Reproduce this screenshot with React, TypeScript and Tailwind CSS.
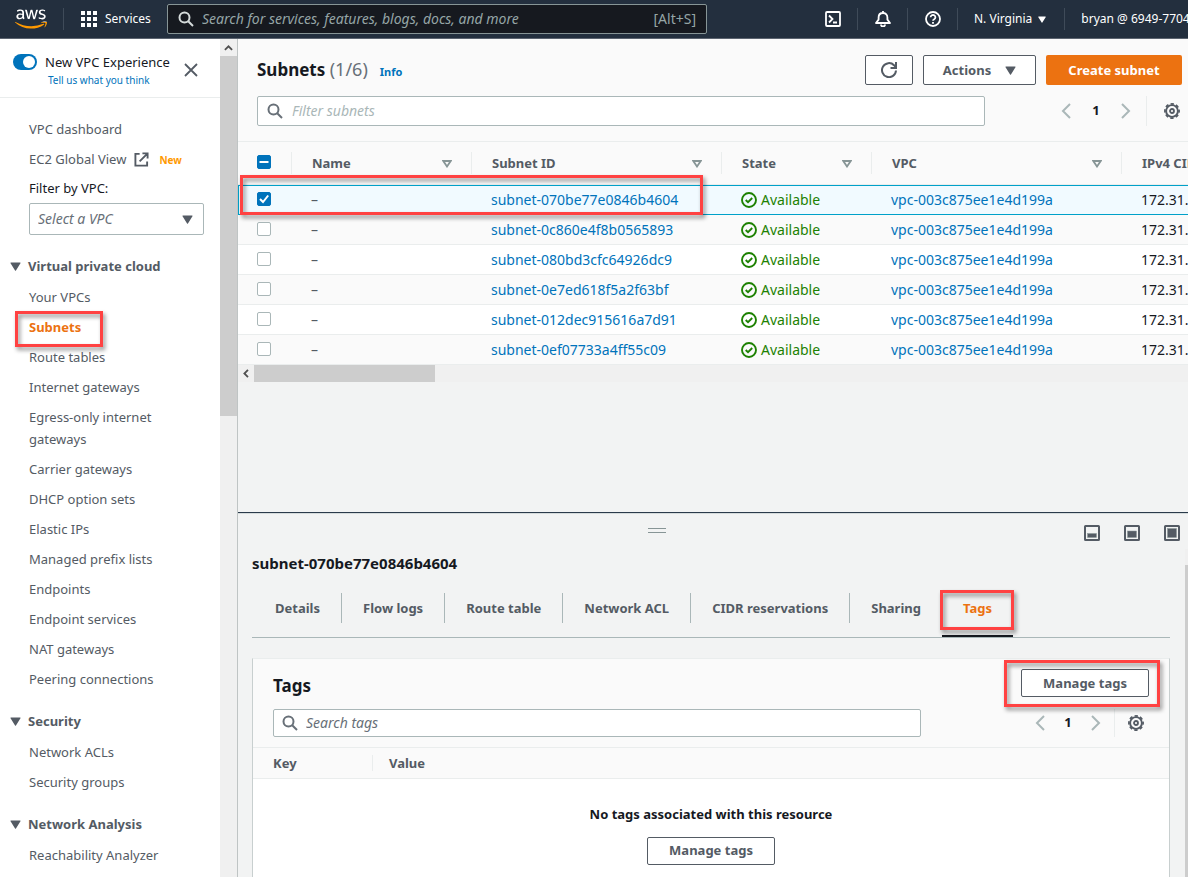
import React, { useState } from "react";
import { FaAws } from "react-icons/fa";

const vpcLinks = [
  "Your VPCs",
  "Subnets",
  "Route tables",
  "Internet gateways",
  "Egress-only internet gateways",
  "Carrier gateways",
  "DHCP option sets",
  "Elastic IPs",
  "Managed prefix lists",
  "Endpoints",
  "Endpoint services",
  "NAT gateways",
  "Peering connections",
];

const subnetIds = [
  "subnet-070be77e0846b4604",
  "subnet-0c860e4f8b0565893",
  "subnet-080bd3cfc64926dc9",
  "subnet-0e7ed618f5a2f63bf",
  "subnet-012dec915616a7d91",
  "subnet-0ef07733a4ff55c09",
];

const tabs = ["Details", "Flow logs", "Route table", "Network ACL", "CIDR reservations", "Sharing", "Tags"];

function Caret({ className = "", size = "h-[9px] w-[11px]" }: { className?: string; size?: string }) {
  return (
    <svg viewBox="0 0 12 10" className={`shrink-0 ${size} ${className}`} fill="currentColor" aria-hidden="true">
      <path d="M1 0.5h10a.6.6 0 0 1 .5 1L6.5 9.4a.6.6 0 0 1-1 0L.5 1.5a.6.6 0 0 1 .5-1z" />
    </svg>
  );
}

function SearchIcon({ className = "" }: { className?: string }) {
  return (
    <svg viewBox="0 0 16 16" className={`size-4 shrink-0 ${className}`} fill="none" stroke="currentColor" strokeWidth="2" aria-hidden="true">
      <circle cx="6.5" cy="6.5" r="5" />
      <path d="M10.2 10.2l4.8 4.8" />
    </svg>
  );
}

function GearIcon() {
  return (
    <svg viewBox="0 0 16 16" className="size-4" fill="none" stroke="currentColor" aria-hidden="true">
      <circle cx="8" cy="8" r="5.9" strokeWidth="1.9" />
      <circle cx="8" cy="8" r="7.1" strokeWidth="1.7" strokeDasharray="3.3 2.276" strokeDashoffset="1.65" />
      <circle cx="8" cy="8" r="2" strokeWidth="1.8" />
    </svg>
  );
}

function Chevron({ flip = false }: { flip?: boolean }) {
  return (
    <svg viewBox="0 0 10 16" className="h-4 w-[10px]" fill="none" stroke="currentColor" strokeWidth="2" aria-hidden="true">
      <path d={flip ? "M1 1l7 7-7 7" : "M9 1L2 8l7 7"} />
    </svg>
  );
}

function Divider({ className = "" }: { className?: string }) {
  return <span className={`w-px shrink-0 ${className}`} />;
}

function Pager({ roomy = false }: { roomy?: boolean }) {
  return (
    <div className="flex shrink-0 items-center text-[13px] font-bold">
      <button type="button" aria-label="Previous page" className="grid w-5 place-items-center text-[#aab7b8]">
        <Chevron />
      </button>
      <span className={`text-center text-[#16191f] ${roomy ? "w-10" : "w-9"}`}>1</span>
      <button type="button" aria-label="Next page" className="grid w-5 place-items-center text-[#aab7b8]">
        <Chevron flip />
      </button>
      <Divider className={`bg-[#eaeded] ${roomy ? "ml-[10px] h-[30px]" : "ml-2 h-7"}`} />
      <button type="button" aria-label="Preferences" className={`text-[#545b64] ${roomy ? "ml-[17px]" : "ml-[13px]"}`}>
        <GearIcon />
      </button>
    </div>
  );
}

function Checkbox({ label, checked, mixed = false, onChange }: { label: string; checked: boolean; mixed?: boolean; onChange: () => void }) {
  const on = checked || mixed;
  return (
    <span className="grid size-[14px] place-items-center">
      <input
        type="checkbox"
        aria-label={label}
        checked={checked}
        onChange={onChange}
        className={`col-start-1 row-start-1 size-[14px] appearance-none rounded-xs border ${on ? "border-[#0073bb] bg-[#0073bb]" : "border-[#aab7b8] bg-white"}`}
      />
      {on && (
        <svg viewBox="0 0 14 14" className="pointer-events-none col-start-1 row-start-1 size-[14px]" fill="none" stroke="white" strokeWidth="2" aria-hidden="true">
          <path d={mixed ? "M2.5 7h9" : "M3 7l3 3 5.2-6.5"} />
        </svg>
      )}
    </span>
  );
}

function Highlight({ className }: { className: string }) {
  return (
    <span
      aria-hidden="true"
      className={`pointer-events-none absolute z-10 border-[3px] border-[#ff4242] drop-shadow-[2px_3px_2px_rgba(0,0,0,0.45)] ${className}`}
    />
  );
}

function TopBar() {
  return (
    <header className="flex h-[39px] shrink-0 items-center overflow-hidden border-b border-[#5c6470] bg-[#232f3e] text-[12px] whitespace-nowrap text-white">
      <a href="#home" aria-label="AWS home" className="ml-[15px] shrink-0">
        <svg width="0" height="0" className="absolute" aria-hidden="true">
          <linearGradient id="logo-fill" gradientUnits="userSpaceOnUse" x1="0" y1="0" x2="0" y2="512">
            <stop offset="0.62" stopColor="#fff" />
            <stop offset="0.62" stopColor="#f90" />
          </linearGradient>
        </svg>
        <FaAws className="h-[26px] w-[32px] [&_path]:fill-[url(#logo-fill)]" />
      </a>
      <Divider className="ml-4 h-[22px] bg-[#3f4b59]" />
      <button type="button" className="ml-[17px] flex shrink-0 items-center gap-2">
        <svg viewBox="0 0 16 16" className="size-4" fill="white" aria-hidden="true">
          {[0, 6, 12].map((y) => [0, 6, 12].map((x) => <rect key={`${x}-${y}`} x={x} y={y} width="4" height="4" />))}
        </svg>
        <span className="w-[46px] text-left">Services</span>
      </button>
      <label className="ml-4 flex h-[30px] w-[540px] shrink-0 items-center rounded-xs border border-[#879596] bg-[#16191f] px-[10px]">
        <SearchIcon className="mr-2 text-[#d5dbdb]" />
        <input
          type="search"
          aria-label="Search"
          placeholder="Search for services, features, blogs, docs, and more"
          className="min-w-0 flex-1 bg-transparent pb-[2px] text-[14px] outline-none placeholder:text-[#95a5a6] placeholder:italic"
        />
        <span className="pb-[2px] text-[14px] text-[#95a5a6]">[Alt+S]</span>
      </label>
      <div className="flex flex-1 items-center pl-[118px]">
        <button type="button" aria-label="CloudShell" className="shrink-0">
          <svg viewBox="0 0 16 16" className="size-4" fill="none" stroke="white" strokeWidth="1.8" aria-hidden="true">
            <rect x="1" y="1" width="14" height="14" rx="1" />
            <path d="M4 4.5L7.5 8 4 11.5M8 11.5h4" />
          </svg>
        </button>
        <Divider className="ml-4 h-[22px] bg-[#3f4b59]" />
        <button type="button" aria-label="Notifications" className="ml-[17px] shrink-0">
          <svg viewBox="0 0 16 16" className="size-4" fill="none" stroke="white" strokeWidth="1.8" strokeLinejoin="round" aria-hidden="true">
            <path d="M8 0v2M1 12h14l-2.600-3.400V6.400C12.400 3.600 10.400 2 8 2S3.600 3.600 3.600 6.400V8.600z" />
            <path d="M6 13.500a2 2 0 0 0 4 0" />
          </svg>
        </button>
        <Divider className="ml-4 h-[22px] bg-[#3f4b59]" />
        <button type="button" aria-label="Help" className="ml-[17px] shrink-0">
          <svg viewBox="0 0 16 16" className="size-4" fill="none" stroke="white" strokeWidth="1.8" aria-hidden="true">
            <circle cx="8" cy="8" r="7" />
            <path d="M5.600 6.300a2.400 2.300 0 1 1 3.600 2c-.9.5-1.200.8-1.200 1.500M8 11v1.700" />
          </svg>
        </button>
        <Divider className="ml-4 h-[22px] bg-[#3f4b59]" />
        <button type="button" className="ml-4 flex shrink-0 items-center gap-[6px]">
          N. Virginia
          <Caret size="h-[7px] w-[8px]" />
        </button>
        <Divider className="ml-[18px] h-[22px] bg-[#3f4b59]" />
        <button type="button" className="ml-4 shrink-0">bryan @ 6949-7704</button>
      </div>
    </header>
  );
}

function NavSection({ title, links, active }: { title: string; links: string[]; active?: string }) {
  return (
    <section className="mt-5">
      <h2>
        <button type="button" className="flex items-center gap-[7px] pl-[10px] font-bold">
          <Caret />
          {title}
        </button>
      </h2>
      <ul className="mt-[9px] flex flex-col gap-2 pr-12 pl-[29px]">
        {links.map((link) => (
          <li key={link} className="relative">
            {link === active && <Highlight className="top-[-5px] left-[-14px] h-[36px] w-[88px]" />}
            <a href="#nav" className={link === active ? "font-bold text-[#ec7211]" : ""}>
              {link}
            </a>
          </li>
        ))}
      </ul>
    </section>
  );
}

function Sidebar() {
  return (
    <aside className="flex w-[238px] shrink-0 border-r border-[#bfc4c4] bg-white text-[13px] leading-[22px] text-[#545b64]">
      <div className="min-w-0 flex-1 overflow-hidden">
        <div className="flex h-[59px] items-start border-b border-[#eaeded] pt-[13px] pl-[13px]">
          <label className="flex items-center pt-[2px]">
            <input type="checkbox" role="switch" aria-label="New VPC Experience" defaultChecked className="peer sr-only" />
            <span className="flex h-4 w-6 items-center justify-end rounded-full bg-[#0073bb] pr-[2px]">
              <span className="size-3 rounded-full bg-white" />
            </span>
          </label>
          <div className="ml-2 w-[130px] whitespace-nowrap">
            <p className="leading-5 text-[#16191f]">New VPC Experience</p>
            <a href="#feedback" className="ml-[3px] block text-[10px] leading-4 text-[#0073bb]">Tell us what you think</a>
          </div>
          <button type="button" aria-label="Close navigation" className="mt-[11px] ml-[9px]">
            <svg viewBox="0 0 14 14" className="size-[14px]" stroke="#545b64" strokeWidth="1.8" aria-hidden="true">
              <path d="M1 1l12 12M13 1L1 13" />
            </svg>
          </button>
        </div>
        <nav className="pt-5">
          <ul className="flex flex-col gap-2 pl-[29px]">
            <li><a href="#dashboard">VPC dashboard</a></li>
            <li>
              <a href="#global" className="flex items-center">
                EC2 Global View
                <svg viewBox="0 0 16 16" className="ml-2 size-[15px]" fill="none" stroke="currentColor" strokeWidth="2" aria-hidden="true">
                  <path d="M6 2H1.500v12.500H14V10M9 1.500h5.500V7M14 2L6 10" />
                </svg>
                <span className="ml-[10px] pt-[2px] text-[10px] leading-5 font-bold text-[#f90]">New</span>
              </a>
            </li>
          </ul>
          <div className="mt-2 flex flex-col pr-4 pl-[29px]">
            <label htmlFor="vpc-filter" className="leading-5 text-[#16191f]">Filter by VPC:</label>
            <div className="mt-[5px] grid items-center">
              <select id="vpc-filter" className="col-start-1 row-start-1 h-8 appearance-none rounded-xs border border-[#aab7b8] bg-white px-2 text-[14px] text-[#687078] italic">
                <option>Select a VPC</option>
              </select>
              <Caret className="pointer-events-none col-start-1 row-start-1 mr-[11px] justify-self-end" />
            </div>
          </div>
          <NavSection title="Virtual private cloud" links={vpcLinks} active="Subnets" />
          <NavSection title="Security" links={["Network ACLs", "Security groups"]} />
          <NavSection title="Network Analysis" links={["Reachability Analyzer"]} />
        </nav>
      </div>
      <div className="flex w-[17px] shrink-0 flex-col bg-[#f0f0f0]" aria-hidden="true">
        <span className="grid h-[17px] place-items-center">
          <svg viewBox="0 0 10 6" className="h-[6px] w-[9px]" fill="none" stroke="#505050" strokeWidth="2"><path d="M1 5.200l4-4 4 4" /></svg>
        </span>
        <span className="h-[360px] bg-[#cdcdcd]" />
      </div>
    </aside>
  );
}

function HeaderCell({ children, sortable = true }: { children: React.ReactNode; sortable?: boolean }) {
  return (
    <th scope="col" className="h-[43px] border-b border-[#eaeded] p-0 text-left text-[13px] font-bold">
      <div className="flex h-[22px] items-center justify-between border-l border-[#eaeded] pt-px pr-[19px] pl-5 whitespace-nowrap">
        {children}
        {sortable && (
          <svg viewBox="0 0 10 8" className="h-2 w-[10px]" fill="none" stroke="#879596" strokeWidth="1.8" aria-hidden="true">
            <path d="M1.300 1h7.400L5 6.500z" />
          </svg>
        )}
      </div>
    </th>
  );
}

function SubnetTable() {
  const [selected, setSelected] = useState(0);
  return (
    <section className="relative shrink-0 text-[14px] text-[#545b64]">
      <div className="overflow-hidden">
        <table className="w-full min-w-[1133px] table-fixed border-separate border-spacing-0">
          <colgroup>
            <col className="w-[53px]" />
            <col className="w-[180px]" />
            <col className="w-[250px]" />
            <col className="w-[150px]" />
            <col className="w-[250px]" />
            <col />
          </colgroup>
          <thead className="bg-[#fafafa]">
            <tr>
              <th scope="col" className="border-b border-[#eaeded] pb-[2px] pl-[19px]">
                <Checkbox label="Select all subnets" checked={false} mixed onChange={() => setSelected(0)} />
              </th>
              <HeaderCell>Name</HeaderCell>
              <HeaderCell>Subnet ID</HeaderCell>
              <HeaderCell>State</HeaderCell>
              <HeaderCell>VPC</HeaderCell>
              <HeaderCell sortable={false}>IPv4 CIDR</HeaderCell>
            </tr>
          </thead>
          <tbody>
            {subnetIds.map((id, i) => {
              const on = i === selected;
              const cell = on ? "border-y border-[#00a1c9] pb-px" : "border-b border-[#eaeded] pb-0";
              return (
                <tr key={id} className={on ? "bg-[#f1faff]" : i % 2 ? "bg-[#fafafa]" : "bg-white"}>
                  <td className={`h-[30px] border-b pt-0 pr-0 pb-[2px] ${on ? "border-t border-l border-[#00a1c9] pl-[18px]" : "border-[#eaeded] pl-[19px]"}`}>
                    <Checkbox label={`Select ${id}`} checked={on} onChange={() => setSelected(i)} />
                  </td>
                  <td className={`pt-0 pr-0 pl-5 ${cell}`}>–</td>
                  <td className={`pt-0 pr-0 pl-5 ${cell}`}>
                    <a href="#subnet" className="text-[#0073bb]">{id}</a>
                  </td>
                  <td className={`pt-0 pr-0 pl-5 ${cell}`}>
                    <span className="flex items-center gap-1 text-[#1d8102]">
                      <svg viewBox="0 0 16 16" className="size-4" fill="none" stroke="currentColor" strokeWidth="1.900" aria-hidden="true">
                        <circle cx="8" cy="8" r="7" />
                        <path d="M4.700 8l2.300 2.200 4.200-4.200" />
                      </svg>
                      Available
                    </span>
                  </td>
                  <td className={`pt-0 pr-0 pl-5 ${cell}`}>
                    <a href="#vpc" className="text-[#0073bb]">vpc-003c875ee1e4d199a</a>
                  </td>
                  <td className={`pt-0 pr-0 pl-5 text-[#16191f] ${cell}`}>172.31.0.0/20</td>
                </tr>
              );
            })}
          </tbody>
        </table>
      </div>
      <div className="flex h-[17px] bg-[#f0f0f0]" aria-hidden="true">
        <span className="grid w-4 place-items-center">
          <svg viewBox="0 0 6 10" className="h-[9px] w-[6px]" fill="none" stroke="#505050" strokeWidth="2"><path d="M5.200 1l-4 4 4 4" /></svg>
        </span>
        <span className="w-[181px] bg-[#cdcdcd]" />
      </div>
      <Highlight className="top-[33px] left-[2px] h-[40px] w-[463px]" />
    </section>
  );
}

const outlineButton = "rounded-xs border border-[#545b64] bg-white text-[13px] font-bold text-[#545b64]";

function SubnetsHeader() {
  return (
    <section className="shrink-0 border-b border-[#eaeded] bg-[#fafafa] pt-4 pr-[6px] pb-[15px] pl-[19px]">
      <div className="flex h-[30px] items-center">
        <h1 className="pb-[2px] text-[17px] font-bold text-[#16191f]">
          Subnets <span className="text-[18px] font-normal text-[#687078]">(1/6)</span>
        </h1>
        <a href="#info" className="ml-3 pt-1 text-[11px] font-bold text-[#0073bb]">Info</a>
        <div className="ml-auto flex h-full gap-[10px]">
          <button type="button" aria-label="Refresh" className={`grid w-12 place-items-center ${outlineButton}`}>
            <svg viewBox="0 0 16 16" className="size-4" fill="none" stroke="currentColor" strokeWidth="2" aria-hidden="true">
              <path d="M15 8.500A7 7 0 1 1 13 3.200L14.800 5.300M15 0v6H9.500" />
            </svg>
          </button>
          <button type="button" className={`flex w-[113px] items-center justify-center gap-[14px] pt-px ${outlineButton}`}>
            Actions
            <Caret />
          </button>
          <button type="button" className="w-[136px] rounded-xs bg-[#ec7211] pt-px text-[13px] font-bold text-white">Create subnet</button>
        </div>
      </div>
      <div className="mt-[11px] flex justify-between">
        <label className="flex h-[30px] w-[728px] items-center rounded-xs border border-[#aab7b8] bg-white px-[9px]">
          <SearchIcon className="mr-[9px] text-[#687078]" />
          <input type="search" aria-label="Filter subnets" placeholder="Filter subnets" className="min-w-0 flex-1 pb-[2px] text-[14px] outline-none placeholder:text-[#aab7b8] placeholder:italic" />
        </label>
        <div className="flex pr-[2px]"><Pager roomy /></div>
      </div>
    </section>
  );
}

function LayoutIcon({ y, label }: { y: number; label: string }) {
  return (
    <button type="button" aria-label={label}>
      <svg viewBox="0 0 16 16" className="size-4" aria-hidden="true">
        <rect x="1" y="1" width="14" height="14" rx="0.500" fill="none" stroke="#545b64" strokeWidth="2" />
        <rect x="3.500" y={y} width="9" height={12.500 - y} fill="#545b64" stroke="#879596" strokeWidth="0.500" />
      </svg>
    </button>
  );
}

function DetailsPanel() {
  const [tab, setTab] = useState("Tags");
  return (
    <section className="flex min-h-0 flex-1 flex-col border-t border-[#2a3a4a] text-[13px] text-[#545b64]">
      <div className="flex h-[36px] shrink-0 items-center border-t border-[#d5dbdb] pt-[2px] pr-2">
        <span className="ml-[410px] flex h-[9px] w-[18px] flex-col gap-[3px]" aria-label="Resize panel" role="separator">
          <span className="h-px bg-[#879596]" />
          <span className="h-px bg-[#879596]" />
        </span>
        <div className="ml-auto flex gap-6">
          <LayoutIcon y={8.5} label="Small panel" />
          <LayoutIcon y={6} label="Medium panel" />
          <LayoutIcon y={3.5} label="Full panel" />
        </div>
      </div>
      <div className="flex min-h-0 flex-1">
        <div className="flex min-w-0 flex-1 flex-col overflow-hidden pr-[15px] pl-[14px]">
          <h2 className="mt-1 text-[15px] leading-5 font-bold text-[#16191f]">subnet-070be77e0846b4604</h2>
          <div role="tablist" className="mt-4 flex h-[49px] shrink-0 items-start border-b border-[#aab7b8] pl-[2px]">
            {tabs.map((name, i) => (
              <div key={name} className="relative flex h-[48px] items-start">
                {name === "Tags" && <Highlight className="top-[1px] left-[-2px] h-[40px] w-[74px]" />}
                <button
                  type="button"
                  role="tab"
                  aria-selected={tab === name}
                  onClick={() => setTab(name)}
                  className={`flex h-full items-start border-b-2 px-[21px] pt-[10px] font-bold whitespace-nowrap ${tab === name ? "border-[#16191f] text-[#ec7211]" : "border-transparent"}`}
                >
                  {name}
                </button>
                {i < 5 && <Divider className="mt-1 h-[30px] bg-[#aab7b8]" />}
              </div>
            ))}
          </div>
          <div className="mt-5 flex min-h-0 flex-1 flex-col border border-b-0 border-t-[#eaeded] border-r-[#c8cfcf] border-l-[#c8cfcf] bg-white">
            <div className="border-b border-[#eaeded] bg-[#fafafa] pt-[10px] pr-5 pb-[10px] pl-5">
              <div className="relative flex h-7 items-center justify-between">
                <h3 className="pt-[6px] text-[17px] font-bold text-[#16191f]">Tags</h3>
                <button type="button" className={`h-7 w-[128px] pt-px ${outlineButton}`}>Manage tags</button>
                <Highlight className="top-[-9px] right-[-11px] h-[47px] w-[156px]" />
              </div>
              <div className="mt-3 flex justify-between">
                <label className="flex h-7 w-[648px] items-center rounded-xs border border-[#aab7b8] bg-white px-2">
                  <SearchIcon className="mr-2 text-[#687078]" />
                  <input type="search" aria-label="Search tags" placeholder="Search tags" className="min-w-0 flex-1 pb-[2px] text-[14px] outline-none placeholder:text-[#687078] placeholder:italic" />
                </label>
                <div className="flex pr-[5px]"><Pager /></div>
              </div>
            </div>
            <table className="w-full table-fixed">
              <thead>
                <tr className="h-[30px] border-b border-[#eaeded] bg-[#fafafa] text-left">
                  <th scope="col" className="w-[119px] p-0 pt-px pl-5">Key</th>
                  <th scope="col" className="p-0 pt-px"><div className="flex h-4 items-center border-l border-[#eaeded] pl-4">Value</div></th>
                </tr>
              </thead>
              <tbody>
                <tr>
                  <td colSpan={2} className="p-0 pt-[25px] text-center">
                    <p className="leading-5 font-bold text-[#16191f]">No tags associated with this resource</p>
                    <button type="button" className={`mt-[13px] h-7 w-[128px] pt-px ${outlineButton}`}>Manage tags</button>
                  </td>
                </tr>
              </tbody>
            </table>
          </div>
        </div>
        <div className="w-[3px] shrink-0 bg-[#f0f0f0] pt-4" aria-hidden="true">
          <div className="h-full bg-[#cdcdcd]" />
        </div>
      </div>
    </section>
  );
}

export default function App() {
  return (
    <div className="flex h-screen flex-col overflow-hidden font-['Noto_Sans',sans-serif]">
      <TopBar />
      <div className="flex min-h-0 flex-1">
        <Sidebar />
        <main className="flex min-w-0 flex-1 flex-col bg-[#f2f3f3]">
          <div className="flex h-[473px] shrink-0 flex-col overflow-hidden">
            <SubnetsHeader />
            <SubnetTable />
          </div>
          <DetailsPanel />
        </main>
      </div>
    </div>
  );
}
